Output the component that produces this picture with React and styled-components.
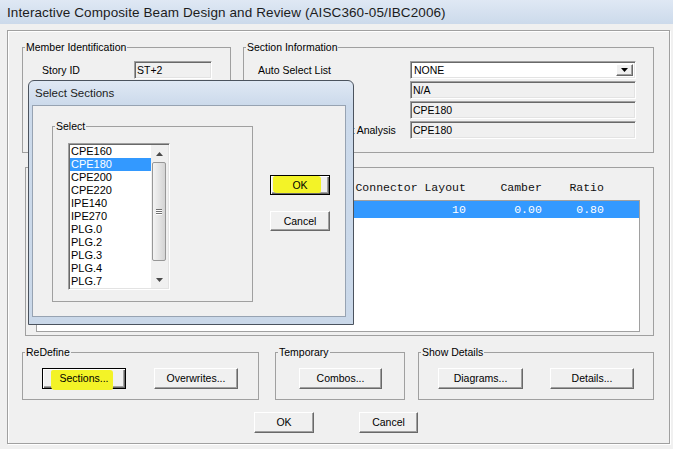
import React from 'react'
import styled, { createGlobalStyle, css } from 'styled-components'

const GlobalStyle = createGlobalStyle`
  * { box-sizing: border-box; }
  html, body { margin: 0; padding: 0; background: #f0f0f0; }
  body {
    font-family: "Liberation Sans", Arial, sans-serif;
    font-size: 10.5px;
    color: #000;
  }
`

const sunken = css`
  border: 1px solid;
  border-color: #a0a0a0 #fff #fff #a0a0a0;
  box-shadow: inset 1px 1px 0 #696969, inset -1px -1px 0 #e3e3e3;
`

const raised = css`
  border: 1px solid;
  border-color: #fff #696969 #696969 #fff;
  box-shadow: inset -1px -1px 0 #a0a0a0;
  background: #f0f0f0;
`

const Window = styled.div`
  position: relative;
  width: 673px;
  height: 449px;
  overflow: hidden;
  background: #f0f0f0;
  display: flex;
  flex-direction: column;
`

const TitleBar = styled.div`
  flex: none;
  height: 24px;
  display: flex;
  align-items: center;
  padding-left: 7px;
  background: linear-gradient(#dfe8f4, #ccdaeb);
  font-size: 13.5px;
  letter-spacing: 0.1px;
  color: #1c1c1c;
`

const Panel = styled.div`
  flex: 1;
  margin: 6px 3px 5px 7px;
  border: 1px solid #a0a0a0;
  box-shadow: inset 1px 1px 0 #fff, 1px 1px 0 #fff;
  padding: 10px 15px 0 14px;
  display: flex;
  flex-direction: column;
`

const Row = styled.div`
  display: flex;
  gap: ${p => p.$gap || 0}px;
  margin-top: ${p => p.$top || 0}px;
`

const Group = styled.fieldset`
  margin: 0 0 0 ${p => p.$left || 0}px;
  padding: 0 0 0 2px;
  min-width: 0;
  border: 1px solid #a0a0a0;
  width: ${p => (p.$w ? `${p.$w}px` : 'auto')};
  flex: ${p => (p.$w ? 'none' : '1')};
`

const Legend = styled.legend`
  padding: 0 1px;
  line-height: 13px;
  font-size: 10.5px;
`

const GroupBody = styled.div`
  padding: ${p => p.$pad};
  display: flex;
  gap: ${p => p.$gap || 0}px;
  align-items: flex-start;
`

const FieldGrid = styled.div`
  display: grid;
  grid-template-columns: ${p => p.$label}px ${p => p.$field}px;
  grid-auto-rows: 18px;
  row-gap: 2px;
  align-items: center;
`

const Label = styled.span`
  white-space: nowrap;
  padding-bottom: 1px;
`

const Field = styled.div`
  ${sunken};
  height: 18px;
  background: ${p => (p.$white ? '#fff' : '#f0f0f0')};
  padding: 0 0 1px 2px;
  display: flex;
  align-items: center;
`

const Combo = styled(Field)`
  padding: 2px 2px 2px 2px;
  justify-content: space-between;
  span { padding-left: 1px; }
`

const ComboArrow = styled.div`
  ${raised};
  width: 17px;
  height: 100%;
  display: flex;
  align-items: center;
  justify-content: center;
`

const Button = styled.button`
  ${raised};
  position: relative;
  width: ${p => p.$w || 84}px;
  height: ${p => p.$h || 21}px;
  padding: 0 0 1px;
  font-family: inherit;
  font-size: 10.5px;
  color: #000;
  display: flex;
  align-items: center;
  justify-content: center;
  flex: none;
  ${p => p.$default && css`
    border-color: #000;
    box-shadow: inset 1px 1px 0 #fff, inset -1px -1px 0 #696969, inset -2px -2px 0 #a0a0a0;
  `}
  span { position: relative; }
`

const Marker = styled.i`
  position: absolute;
  left: ${p => p.$x}px;
  top: ${p => p.$y}px;
  width: ${p => p.$w}px;
  height: ${p => p.$h}px;
  background: #f3f327;
  border-radius: 2px 3px 2px 4px;
`

const ColHeader = styled.div`
  font-family: "Liberation Mono", "Courier New", monospace;
  font-size: 11.5px;
  line-height: 14px;
  white-space: pre;
  padding-left: 2px;
  margin-bottom: 5px;
  color: #111;
`

const ResultList = styled.div`
  border: 1px solid #a0a0a0;
  background: #fff;
  height: 132px;
`

const ResultRow = styled.div`
  font-family: "Liberation Mono", "Courier New", monospace;
  font-size: 11.5px;
  line-height: 17px;
  white-space: pre;
  padding-left: 1px;
  background: ${p => (p.$sel ? '#3399ff' : 'transparent')};
  color: ${p => (p.$sel ? '#fff' : '#000')};
`

const Modal = styled.div`
  position: absolute;
  left: 28px;
  top: 80px;
  width: 326px;
  height: 245px;
  border: 1px solid #4b535e;
  border-radius: 6px 6px 0 0;
  background: linear-gradient(#dfe8f4, #ccdaeb 24px, #cad8e9);
  padding: 0 7px 7px 3px;
  display: flex;
  flex-direction: column;
`

const ModalTitle = styled.div`
  height: 24px;
  flex: none;
  display: flex;
  align-items: center;
  padding-left: 3px;
  font-size: 11.5px;
  color: #1c1c1c;
`

const ModalBody = styled.div`
  flex: 1;
  border: 1px solid #97a3b2;
  background: #f0f0f0;
  display: flex;
  align-items: flex-start;
  padding: 14px 0 0 19px;
`

const ButtonCol = styled.div`
  display: flex;
  flex-direction: column;
  gap: 16px;
  margin: 55px 0 0 17px;
`

const ListBox = styled.div`
  ${sunken};
  width: 102px;
  height: 147px;
  padding: 1px;
  background: #fff;
  display: flex;
  overflow: hidden;
`

const Items = styled.div`
  flex: 1;
  overflow: hidden;
`

const Item = styled.div`
  height: 13px;
  line-height: 13px;
  font-size: 11px;
  padding-left: 1px;
  background: ${p => (p.$sel ? '#3399ff' : 'transparent')};
  color: ${p => (p.$sel ? '#fff' : '#000')};
`

const ScrollBar = styled.div`
  width: 17px;
  flex: none;
  background: #f0f0f0;
  display: flex;
  flex-direction: column;
`

const ScrollArrow = styled.div`
  height: 17px;
  flex: none;
  display: flex;
  align-items: center;
  justify-content: center;
`

const Thumb = styled.div`
  height: 99px;
  margin: 0 2px 0 1px;
  border: 1px solid #979797;
  border-radius: 2px;
  background: linear-gradient(90deg, #f3f3f3, #e4e4e4 50%, #d4d4d4);
  display: flex;
  flex-direction: column;
  align-items: center;
  justify-content: center;
  gap: 1px;
  i {
    width: 6px;
    height: 1px;
    background: #6f6f6f;
    box-shadow: 0 1px 0 #fff;
  }
`

const Track = styled.div`
  flex: 1;
`

const Tri = ({ up, color = '#4a4a4a' }) => (
  <svg width="7" height="4" viewBox="0 0 7 4">
    <polygon points={up ? '0,4 7,4 3.5,0' : '0,0 7,0 3.5,4'} fill={color} />
  </svg>
)

const sections = ['CPE160', 'CPE180', 'CPE200', 'CPE220', 'IPE140', 'IPE270', 'PLG.0', 'PLG.2', 'PLG.3', 'PLG.4', 'PLG.7']

const header =
  'Story'.padEnd(8) + 'Beam'.padEnd(8) + 'Section'.padEnd(12) + 'Length'.padStart(10) + ''.padEnd(8) +
  'Connector Layout' + '     Camber' + '    Ratio'

const resultRow =
  'ST+2'.padEnd(8) + 'B12'.padEnd(8) + 'CPE180'.padEnd(12) + '240.000'.padStart(10) + ''.padEnd(8) +
  '10'.padStart(16) + '0.00'.padStart(11) + '0.80'.padStart(9)

export default function App() {
  return (
    <>
      <GlobalStyle />
      <Window>
        <TitleBar>Interactive Composite Beam Design and Review (AISC360-05/IBC2006)</TitleBar>
        <Panel>
          <Row $gap={12}>
            <Group $w={209}>
              <Legend>Member Identification</Legend>
              <GroupBody $pad="7px 0 13px 17px">
                <FieldGrid $label={92} $field={78}>
                  <Label>Story ID</Label>
                  <Field>ST+2</Field>
                  <Label>Label ID</Label>
                  <Field>B12</Field>
                  <Label>Unique Name</Label>
                  <Field>34</Field>
                  <Label>Frame Type</Label>
                  <Field>Beam</Field>
                </FieldGrid>
              </GroupBody>
            </Group>
            <Group>
              <Legend>Section Information</Legend>
              <GroupBody $pad="7px 0 13px 12px">
                <FieldGrid $label={152} $field={226}>
                  <Label>Auto Select List</Label>
                  <Combo $white>
                    <span>NONE</span>
                    <ComboArrow><Tri color="#000" /></ComboArrow>
                  </Combo>
                  <Label>Optimal Section</Label>
                  <Field>N/A</Field>
                  <Label>Design Section</Label>
                  <Field>CPE180</Field>
                  <Label>Section Used in Last Analysis</Label>
                  <Field>CPE180</Field>
                </FieldGrid>
              </GroupBody>
            </Group>
          </Row>

          <Row $top={8}>
            <Group $left={3}>
              <Legend>Analysis and Design Results</Legend>
              <div style={{ padding: '7px 13px 3px 8px' }}>
                <ColHeader>{header}</ColHeader>
                <ResultList>
                  <ResultRow $sel>{resultRow}</ResultRow>
                </ResultList>
              </div>
            </Group>
          </Row>

          <Row $top={10} $gap={0}>
            <Group $w={237}>
              <Legend>ReDefine</Legend>
              <GroupBody $pad="9px 0 10px 17px" $gap={28}>
                <Button $default>
                  <Marker $x={8} $y={1} $w={62} $h={20} />
                  <span>Sections...</span>
                </Button>
                <Button>
                  <span>Overwrites...</span>
                </Button>
              </GroupBody>
            </Group>
            <Group $w={130} $left={16}>
              <Legend>Temporary</Legend>
              <GroupBody $pad="9px 0 10px 21px">
                <Button $w={83}>
                  <span>Combos...</span>
                </Button>
              </GroupBody>
            </Group>
            <Group $left={13}>
              <Legend>Show Details</Legend>
              <GroupBody $pad="9px 0 10px 17px" $gap={27}>
                <Button $w={85}>
                  <span>Diagrams...</span>
                </Button>
                <Button>
                  <span>Details...</span>
                </Button>
              </GroupBody>
            </Group>
          </Row>

          <Row $top={12} $gap={45} style={{ paddingLeft: 232 }}>
            <Button $w={60}>
              <span>OK</span>
            </Button>
            <Button $w={59}>
              <span>Cancel</span>
            </Button>
          </Row>
        </Panel>

        <Modal>
          <ModalTitle>Select Sections</ModalTitle>
          <ModalBody>
            <Group $w={201}>
              <Legend>Select</Legend>
              <GroupBody $pad="10px 0 11px 13px">
                <ListBox>
                  <Items>
                    {sections.map(s => (
                      <Item key={s} $sel={s === 'CPE180'}>{s}</Item>
                    ))}
                  </Items>
                  <ScrollBar>
                    <ScrollArrow><Tri up /></ScrollArrow>
                    <Thumb><i /><i /><i /></Thumb>
                    <Track />
                    <ScrollArrow><Tri /></ScrollArrow>
                  </ScrollBar>
                </ListBox>
              </GroupBody>
            </Group>
            <ButtonCol>
              <Button $w={60} $h={20} $default>
                <Marker $x={2} $y={0} $w={48} $h={17} />
                <span>OK</span>
              </Button>
              <Button $w={60} $h={20}>
                <span>Cancel</span>
              </Button>
            </ButtonCol>
          </ModalBody>
        </Modal>
      </Window>
    </>
  )
}
